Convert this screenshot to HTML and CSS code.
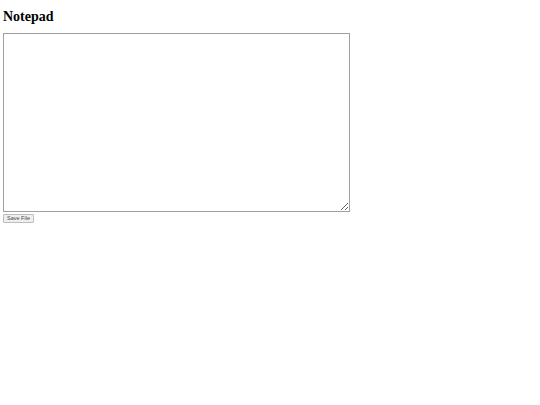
FILE: index.html
```html
<!DOCTYPE html>
<html>
<head>
<meta charset="utf-8">
<title>Notepad</title>
<link rel="stylesheet" href="styles.css">
</head>
<body class="page">
<h1 class="title">Notepad</h1>
<textarea class="editor"></textarea>
<div class="actions"><button class="save-btn">Save File</button></div>
</body>
</html>
```

FILE: styles.css
```css
html, body { margin: 0; padding: 0; background: #fff; }
.page { padding: 3px; font-family: "Liberation Serif", serif; }
.title {
  font-family: "Liberation Serif", serif;
  font-weight: bold;
  font-size: 14px;
  line-height: 16px;
  margin: 6px 0 8px 0;
  color: #000;
}
.editor {
  display: block;
  box-sizing: border-box;
  width: 347px;
  height: 179px;
  margin: 0;
  padding: 1px;
  border: 1px solid #a0a0a0;
  resize: both;
}
.actions { display: flex; margin-top: 2px; }
.save-btn {
  box-sizing: border-box;
  width: 31px;
  height: 9px;
  padding: 0;
  font-family: "Liberation Sans", sans-serif;
  font-size: 5.5px;
  line-height: 7px;
  color: #444;
  background: #efefef;
  border: 1px solid #bdbdbd;
  border-radius: 1px;
}
```
